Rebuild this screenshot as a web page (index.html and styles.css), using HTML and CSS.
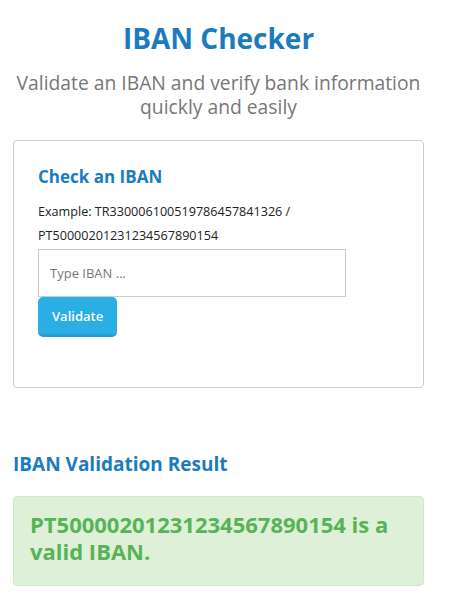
FILE: index.html
```html
<!DOCTYPE html>
<html lang="en">
<head>
    <meta charset="UTF-8">
    <meta name="viewport" content="width=device-width, initial-scale=1.0">
    <title>IBAN Checker</title>
    <link rel="stylesheet" href="styles.css">
</head>
<body>
    <div class="page">
        <header class="intro">
            <h1>IBAN Checker</h1>
            <p class="lead">Validate an IBAN and verify bank information quickly and easily</p>
        </header>

        <div class="check-box">
            <h2>Check an IBAN</h2>
            <p class="example">Example: TR330006100519786457841326 / PT50000201231234567890154</p>
            <form class="check-form" onsubmit="return false;">
                <input type="text" class="iban-input" placeholder="Type IBAN ...">
                <button type="submit" class="btn-validate">Validate</button>
            </form>
        </div>

        <h3 class="result-title">IBAN Validation Result</h3>
        <div class="alert-success">PT50000201231234567890154 is a valid IBAN.</div>
    </div>
</body>
</html>
```

FILE: styles.css
```css
body {
    margin: 0;
    font-family: "Open Sans", "Noto Sans", sans-serif;
    background-color: #fff;
    color: #222;
}
.page {
    width: 411px;
    margin-left: 13px;
}
.intro {
    text-align: center;
    padding-top: 18px;
}
h1 {
    margin: 0;
    font-size: 28px;
    line-height: 40px;
    font-weight: 700;
    color: #1a7bbf;
}
.lead {
    margin: 13px 0 0;
    font-size: 19.3px;
    line-height: 24px;
    color: #777;
}
.check-box {
    margin-top: 21px;
    border: 1px solid #ccc;
    border-radius: 4px;
    padding: 24px 24px 50px;
}
h2 {
    margin: 0;
    font-size: 17px;
    line-height: 24px;
    font-weight: 700;
    color: #1a7bbf;
}
.example {
    margin: 11px 0 0;
    font-size: 12.6px;
    line-height: 24px;
    color: #222;
}
.check-form {
    margin-top: 1px;
}
.iban-input {
    display: block;
    box-sizing: border-box;
    width: 308px;
    height: 48px;
    padding: 0 11px;
    border: 1px solid #ccc;
    font-family: inherit;
    font-size: 13px;
    color: #333;
    outline: none;
}
.iban-input::placeholder {
    color: #777;
}
.btn-validate {
    display: block;
    height: 40px;
    padding: 0 14px;
    border: none;
    border-bottom: 3px solid #2a9bcf;
    border-radius: 5px;
    background-color: #2aaee3;
    color: #fff;
    font-family: inherit;
    font-size: 13px;
    font-weight: 600;
    cursor: pointer;
}
.result-title {
    margin: 62px 0 0;
    font-size: 19px;
    line-height: 28px;
    font-weight: 700;
    color: #1a7bbf;
}
.alert-success {
    margin-top: 18px;
    padding: 14px 16px 20px;
    border: 1px solid #d0e9c6;
    border-radius: 4px;
    background-color: #dff0d8;
    color: #56b456;
    font-size: 22px;
    line-height: 27px;
    font-weight: 700;
}
```
